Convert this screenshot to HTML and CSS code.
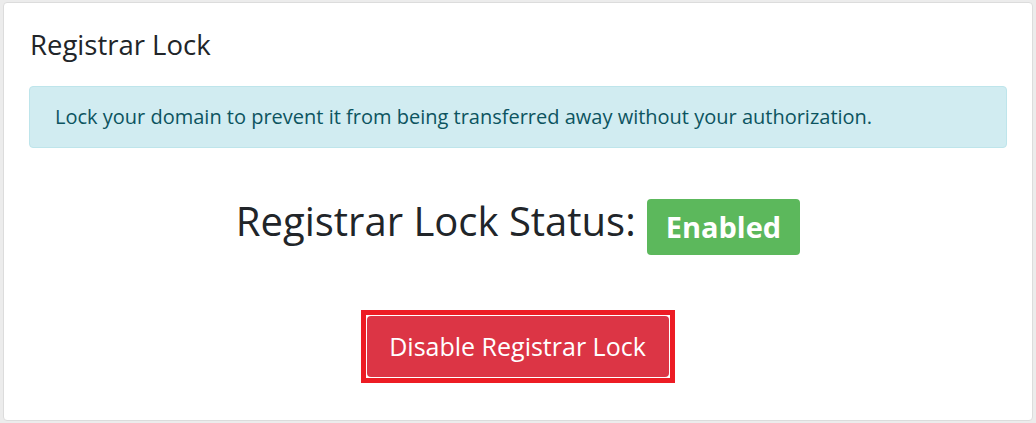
FILE: index.html
```html
<!DOCTYPE html>
<html>
<head>
<meta charset="utf-8">
<link rel="stylesheet" href="styles.css">
</head>
<body>
<div class="card">
  <h3 class="card-title">Registrar Lock</h3>
  <div class="alert">Lock your domain to prevent it from being transferred away without your authorization.</div>
  <h2 class="status"><span class="status-label">Registrar Lock Status:</span><span class="badge">Enabled</span></h2>
  <div class="actions">
    <span class="highlight"><button class="btn-danger">Disable Registrar Lock</button></span>
  </div>
</div>
</body>
</html>
```
FILE: styles.css
```css
html, body {
  margin: 0;
  padding: 0;
}
body {
  background: #ececec;
  font-family: "Open Sans", "Liberation Sans", sans-serif;
  color: #212529;
  padding: 2px 3px 2px 3px;
  height: 423px;
  box-sizing: border-box;
}
.card {
  background: #fff;
  border: 1px solid #dcdcdc;
  border-radius: 4px;
  padding: 23px 25px 0 25px;
  height: 419px;
  box-sizing: border-box;
}
.card-title {
  margin: 0 0 0 1px;
  font-size: 27.5px;
  font-weight: 400;
  line-height: 38px;
}
.alert {
  margin-top: 22px;
  background: #d1ecf1;
  border: 1px solid #bee5eb;
  border-radius: 4px;
  color: #0c5460;
  font-size: 20px;
  line-height: 28px;
  padding: 16px 25px;
}
.status {
  margin: 49px 0 0 0;
  display: flex;
  justify-content: center;
  align-items: flex-start;
  gap: 11px;
  font-size: 40px;
  font-weight: 400;
}
.status-label {
  line-height: 48px;
}
.badge {
  margin-top: 2px;
  background: #5cb85c;
  color: #fff;
  font-size: 29px;
  font-weight: 700;
  line-height: 56px;
  padding: 0 19px;
  border-radius: 4px;
}
.actions {
  margin-top: 55px;
  text-align: center;
}
.highlight {
  display: inline-block;
  border: 5px solid #ed1c24;
  padding: 1px;
  background: #fff;
}
.btn-danger {
  display: block;
  font-family: inherit;
  background: #dc3545;
  color: #fff;
  border: none;
  border-radius: 4px;
  font-size: 25px;
  line-height: 61px;
  padding: 0 23px 0 22px;
  cursor: pointer;
}
```
